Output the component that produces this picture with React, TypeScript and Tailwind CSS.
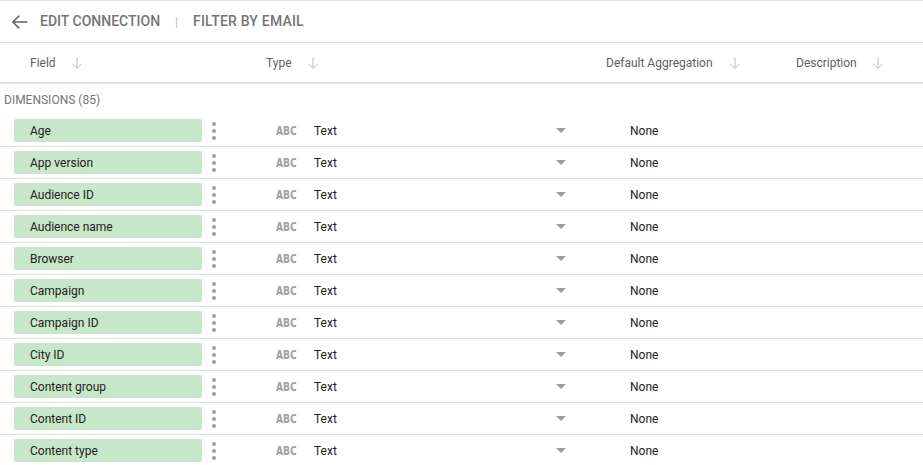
import React from "react";

const fields = [
  "Age",
  "App version",
  "Audience ID",
  "Audience name",
  "Browser",
  "Campaign",
  "Campaign ID",
  "City ID",
  "Content group",
  "Content ID",
  "Content type",
];

function ArrowDown() {
  return (
    <svg width="16" height="16" viewBox="0 0 24 24" className="text-[#bdbdbd]">
      <path d="M12 3.5v16M5 13l7 7 7-7" fill="none" stroke="currentColor" strokeWidth="1.5" />
    </svg>
  );
}

function BackArrow() {
  return (
    <svg width="18" height="18" viewBox="0 0 24 24" className="text-[#616161]">
      <path d="M22 12H3M11 3.5 2.5 12l8.5 8.5" fill="none" stroke="currentColor" strokeWidth="2" />
    </svg>
  );
}

function Dots() {
  return (
    <div className="flex flex-col items-center gap-[3px]">
      <span className="h-[4px] w-[4px] rounded-full bg-[#9e9e9e]" />
      <span className="h-[4px] w-[4px] rounded-full bg-[#9e9e9e]" />
      <span className="h-[4px] w-[4px] rounded-full bg-[#9e9e9e]" />
    </div>
  );
}

function Row({ name }: { name: string }) {
  return (
    <div className="flex h-[32px] items-center border-b border-[#e0e0e0] text-[12px] text-[#212121]">
      <div className="ml-[14px] flex h-[23px] w-[188px] items-center rounded-[2px] bg-[#c8e6c9] pl-[16px]">
        {name}
      </div>
      <div className="flex w-[24px] justify-center">
        <Dots />
      </div>
      <div className="w-[50px]" />
      <div className="w-[38px]">
        <span
          className="inline-block origin-left scale-x-[0.78] text-[13px] font-bold leading-none text-[#a0a0a0]"
          style={{ fontFamily: '"DejaVu Sans Condensed", "DejaVu Sans", sans-serif' }}
        >
          ABC
        </span>
      </div>
      <div className="w-[242px]">Text</div>
      <div className="flex w-[74px] items-center">
        <span className="h-0 w-0 border-x-[5px] border-t-[5px] border-x-transparent border-t-[#9e9e9e]" />
      </div>
      <div>None</div>
    </div>
  );
}

export default function App() {
  return (
    <div
      className="h-[465px] w-[923px] overflow-hidden bg-white"
      style={{ fontFamily: 'Roboto, "Liberation Sans", sans-serif' }}
    >
      <div className="flex h-[43px] items-center border-y border-[#e0e0e0] pl-[11px] text-[14px] font-medium text-[#757575]">
        <BackArrow />
        <span className="ml-[11px]">EDIT CONNECTION</span>
        <span className="ml-[15px] text-[12px] font-normal text-[#bdbdbd]">|</span>
        <span className="ml-[15px] tracking-[0.2px]">FILTER BY EMAIL</span>
      </div>
      <div className="flex h-[41px] items-center border-b-2 border-[#e0e0e0] text-[12px] text-[#616161]">
        <div className="flex w-[266px] items-center pl-[30px]">
          <span>Field</span>
          <span className="ml-[13px]"><ArrowDown /></span>
        </div>
        <div className="flex w-[340px] items-center">
          <span>Type</span>
          <span className="ml-[13px]"><ArrowDown /></span>
        </div>
        <div className="flex w-[190px] items-center">
          <span>Default Aggregation</span>
          <span className="ml-[14px]"><ArrowDown /></span>
        </div>
        <div className="flex items-center">
          <span>Description</span>
          <span className="ml-[13px]"><ArrowDown /></span>
        </div>
      </div>
      <div className="flex h-[31px] items-center pl-[4px] text-[12px] text-[#757575]">
        DIMENSIONS (85)
      </div>
      {fields.map((f) => (
        <Row key={f} name={f} />
      ))}
    </div>
  );
}
